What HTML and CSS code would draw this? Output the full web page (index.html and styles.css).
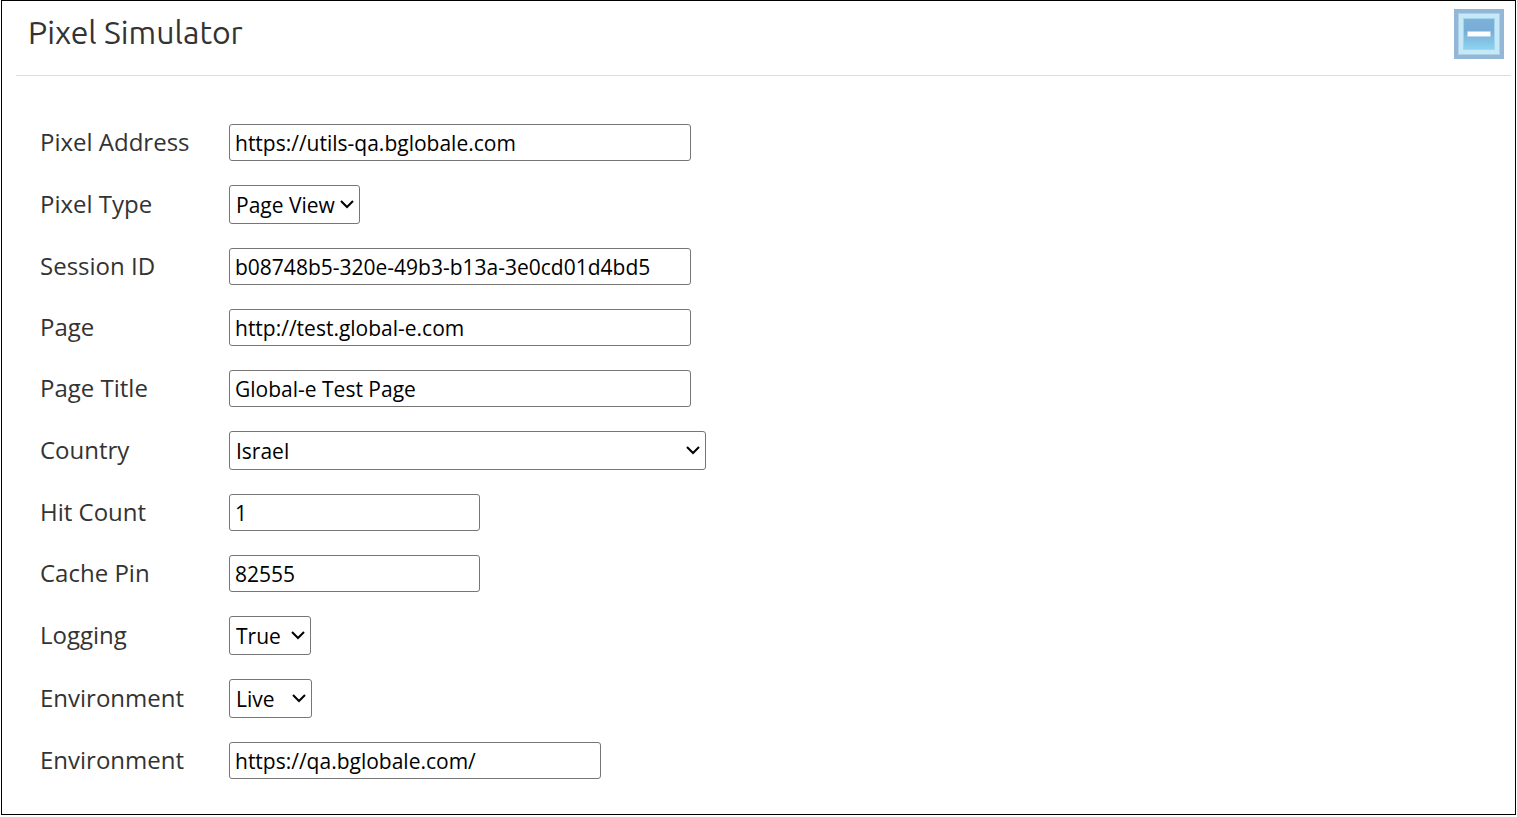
FILE: index.html
```html
<!DOCTYPE html>
<html lang="en">
<head>
<meta charset="utf-8">
<title>Pixel Simulator</title>
<link rel="stylesheet" href="styles.css">
</head>
<body>
<main class="panel">
  <header class="panel-header">
    <h1 class="title">Pixel Simulator</h1>
    <button class="toggle" type="button" aria-label="Collapse">
      <svg class="toggle-icon" viewBox="0 0 50 50" aria-hidden="true">
        <defs><linearGradient id="face" x1="0" y1="0" x2="0" y2="1"><stop offset="0" stop-color="#7eb1da"/><stop offset=".4" stop-color="#78add6"/><stop offset="1" stop-color="#8bd3ef"/></linearGradient></defs>
        <rect width="50" height="50" fill="#94b7d8"/>
        <rect x="4" y="4" width="42" height="42" fill="#acd2e9"/>
        <rect x="5" y="5" width="40" height="40" fill="#c5e9f7"/>
        <rect x="9" y="9" width="32" height="32" fill="#a5d5ec"/>
        <rect x="10" y="10" width="30" height="30" fill="url(#face)"/>
        <rect x="13" y="22" width="24" height="6" rx="1" fill="#b7d7ed"/>
        <rect x="14" y="23" width="22" height="4" fill="#fff"/>
      </svg>
    </button>
  </header>
  <form class="form">
    <label class="label" for="address">Pixel Address</label>
    <input class="field wide" id="address" type="text" value="https://utils-qa.bglobale.com">

    <label class="label" for="type">Pixel Type</label>
    <div class="picker picker-type"><select class="field select" id="type"><option>Page View</option></select><svg class="arrow" viewBox="0 0 14 9" aria-hidden="true"><path d="M1 1 7 7 13 1"/></svg></div>

    <label class="label" for="session">Session ID</label>
    <input class="field wide" id="session" type="text" value="b08748b5-320e-49b3-b13a-3e0cd01d4bd5">

    <label class="label" for="page">Page</label>
    <input class="field wide" id="page" type="text" value="http://test.global-e.com">

    <label class="label" for="page-title">Page Title</label>
    <input class="field wide" id="page-title" type="text" value="Global-e Test Page">

    <label class="label" for="country">Country</label>
    <div class="picker picker-country"><select class="field select" id="country"><option>Israel</option></select><svg class="arrow" viewBox="0 0 14 9" aria-hidden="true"><path d="M1 1 7 7 13 1"/></svg></div>

    <label class="label" for="hits">Hit Count</label>
    <input class="field narrow" id="hits" type="text" value="1">

    <label class="label" for="pin">Cache Pin</label>
    <input class="field narrow" id="pin" type="text" value="82555">

    <label class="label" for="logging">Logging</label>
    <div class="picker picker-logging"><select class="field select" id="logging"><option>True</option><option>False</option></select><svg class="arrow" viewBox="0 0 14 9" aria-hidden="true"><path d="M1 1 7 7 13 1"/></svg></div>

    <label class="label" for="env">Environment</label>
    <div class="picker picker-env"><select class="field select" id="env"><option>Live</option></select><svg class="arrow" viewBox="0 0 14 9" aria-hidden="true"><path d="M1 1 7 7 13 1"/></svg></div>

    <label class="label" for="env-url">Environment</label>
    <input class="field medium" id="env-url" type="text" value="https://qa.bglobale.com/">
  </form>
</main>
</body>
</html>
```

FILE: styles.css
```css
* { box-sizing: border-box; }
body {
  margin: 0 1px;
  background: #fff;
  color: #333;
  font-family: "Open Sans", "Noto Sans", sans-serif;
}
.panel {
  border: 1px solid #000;
  padding: 0 4px 35px 14px;
}
.panel-header {
  display: flex;
  justify-content: space-between;
  align-items: flex-start;
  padding: 8px 7px 16px 12px;
  border-bottom: 1px solid #ddd;
}
.title {
  margin: 0;
  font-family: Ubuntu, "Noto Sans", sans-serif;
  font-size: 32px;
  font-weight: 400;
  line-height: 46px;
}
.toggle {
  padding: 0;
  border: 0;
  background: none;
}
.toggle-icon {
  display: block;
  width: 50px;
  height: 50px;
}
.form {
  display: grid;
  grid-template-columns: 189px 1fr;
  row-gap: 24px;
  align-items: center;
  justify-items: start;
  padding: 48px 0 0 24px;
}
.label {
  padding-bottom: 2px;
  font-size: 24px;
  line-height: 34px;
}
.field {
  height: 37px;
  max-width: 100%;
  padding: 0 5px;
  border: 1px solid #767676;
  border-radius: 3px;
  background: #fff;
  color: #000;
  font-family: inherit;
  font-size: 21px;
}
.wide { width: 462px; }
.medium { width: 372px; }
.narrow { width: 251px; }
.picker {
  position: relative;
  max-width: 100%;
}
.select {
  display: block;
  width: 100%;
  height: 39px;
  padding: 0 6px;
  appearance: none;
}
.picker-type { width: 131px; }
.picker-country { width: 477px; }
.picker-logging { width: 82px; }
.picker-env { width: 83px; }
.arrow {
  position: absolute;
  top: 15px;
  right: 6px;
  width: 14px;
  height: 9px;
  fill: none;
  stroke: #000;
  stroke-width: 2;
  pointer-events: none;
}
```
